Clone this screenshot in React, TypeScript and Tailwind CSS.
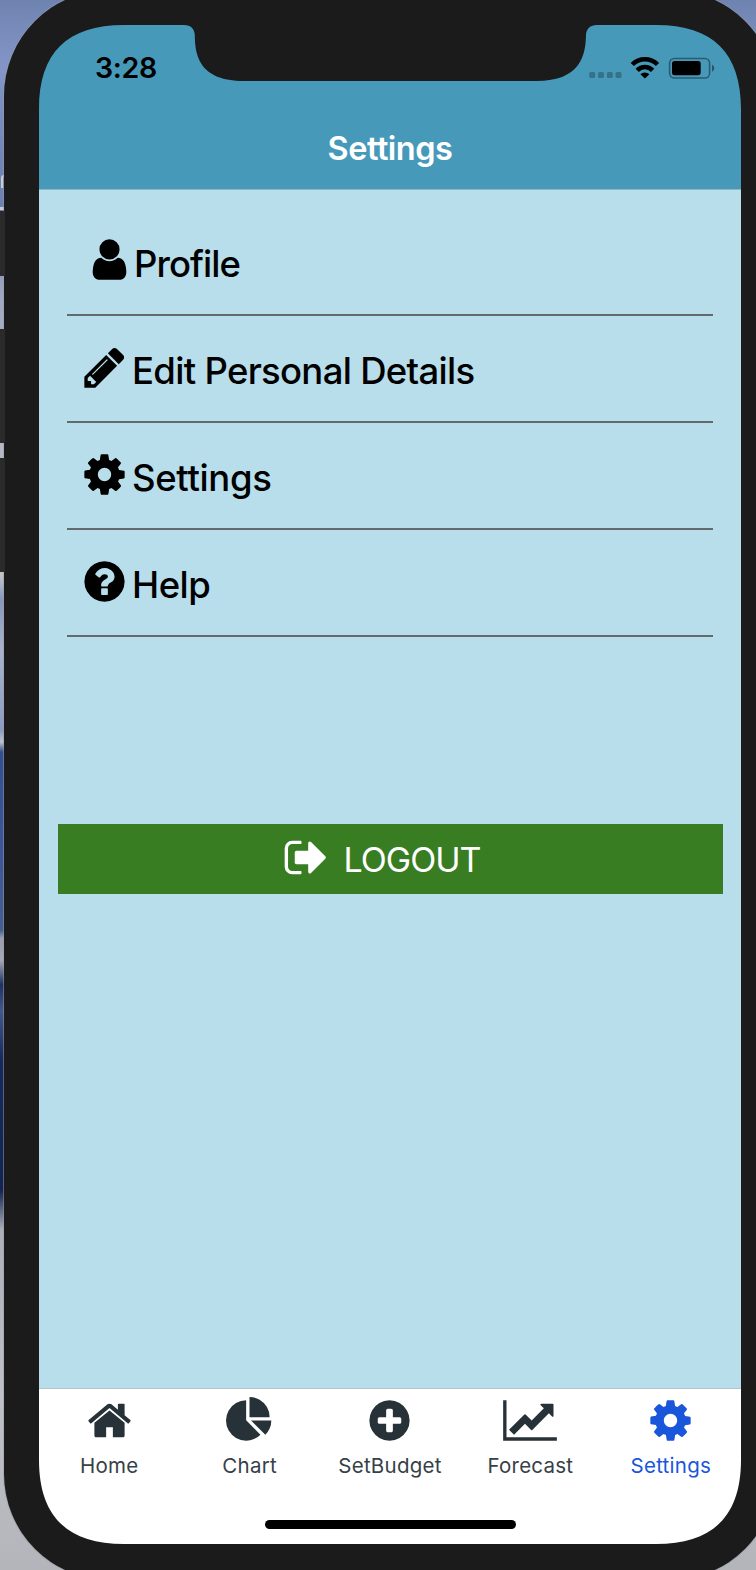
import React from 'react';

const PATHS = {
  user: 'M1536 1399q0 109-62.5 187t-150.5 78h-854q-88 0-150.5-78t-62.5-187q0-85 8.5-160.5t31.5-152 58.5-131 94-89 134.5-34.5q131 128 313 128t313-128q76 0 134.5 34.5t94 89 58.5 131 31.5 152 8.5 160.5zm-256-887q0 159-112.5 271.5t-271.5 112.5-271.5-112.5-112.5-271.5 112.5-271.5 271.5-112.5 271.5 112.5 112.5 271.5z',
  pencil: 'M491 1536l91-91-235-235-91 91v107h128v128h107zm523-928q0-22-22-22-10 0-17 7l-542 542q-7 7-7 17 0 22 22 22 10 0 17-7l542-542q7-7 7-17zm-54-192l416 416-832 832h-416v-416zm683 96q0 53-37 90l-166 166-416-416 166-165q36-38 90-38 53 0 91 38l235 234q37 39 37 91z',
  gear: 'M1152 896q0-106-75-181t-181-75-181 75-75 181 75 181 181 75 181-75 75-181zm512-109v222q0 12-8 23t-20 13l-185 28q-19 54-39 91 35 50 107 138 10 12 10 25t-9 23q-27 37-99 108t-94 71q-12 0-26-9l-138-108q-44 23-91 38-16 136-29 186-7 28-36 28h-222q-14 0-24.5-8.5t-11.5-21.5l-28-184q-49-16-90-37l-141 107q-10 9-25 9-14 0-25-11-126-114-165-168-7-10-7-23 0-12 8-23 15-21 51-66.5t54-70.5q-27-50-41-99l-183-27q-13-2-21-12.5t-8-23.5v-222q0-12 8-23t19-13l186-28q14-46 39-92-40-57-107-138-10-12-10-24 0-10 9-23 26-36 98.5-107.5t94.5-71.5q13 0 26 10l138 107q44-23 91-38 16-136 29-186 7-28 36-28h222q14 0 24.5 8.5t11.5 21.5l28 184q49 16 90 37l142-107q9-9 24-9 13 0 25 10 129 119 165 170 7 8 7 22 0 12-8 23-15 21-51 66.5t-54 70.5q26 50 41 98l183 28q13 2 21 12.5t8 23.5z',
  help: 'M1024 1376v-192q0-14-9-23t-23-9h-192q-14 0-23 9t-9 23v192q0 14 9 23t23 9h192q14 0 23-9t9-23zm256-672q0-88-55.5-163t-138.5-116-170-41q-243 0-371 213-15 24 8 42l132 100q7 6 19 6 16 0 25-12 53-68 86-92 34-24 86-24 48 0 85.5 26t37.5 59q0 38-20 61t-68 45q-63 28-115.5 86.5t-52.5 125.5v36q0 14 9 23t23 9h192q14 0 23-9t9-23q0-19 21.5-49.5t54.5-49.5q32-18 49-28.5t46-35 44.5-48 28-60.5 12.5-81zm384 192q0 209-103 385.5t-279.5 279.5-385.5 103-385.5-103-279.5-279.5-103-385.5 103-385.5 279.5-279.5 385.5-103 385.5 103 279.5 279.5 103 385.5z',
  signOut: 'M704 1440q0 4 1 20t.5 26.5-3 23.5-10 19.5-20.5 6.5h-320q-119 0-203.5-84.5t-84.5-203.5v-704q0-119 84.5-203.5t203.5-84.5h320q13 0 22.5 9.5t9.5 22.5q0 4 1 20t.5 26.5-3 23.5-10 19.5-20.5 6.5h-320q-66 0-113 47t-47 113v704q0 66 47 113t113 47h312l11.5 1 11.5 3 8 5.5 7 9 2 13.5zm928-544q0 26-19 45l-544 544q-19 19-45 19t-45-19-19-45v-288h-448q-26 0-45-19t-19-45v-384q0-26 19-45t45-19h448v-288q0-26 19-45t45-19 45 19l544 544q19 19 19 45z',
  home: 'M1472 992v480q0 26-19 45t-45 19h-384v-384h-256v384h-384q-26 0-45-19t-19-45v-480q0-1 .5-3t.5-3l575-474 575 474q1 2 1 6zm223-69l-62 74q-8 9-21 11h-3q-13 0-21-7l-692-577-692 577q-12 8-24 7-13-2-21-11l-62-74q-8-10-7-23.5t11-21.5l719-599q32-26 76-26t76 26l244 204v-195q0-14 9-23t23-9h192q14 0 23 9t9 23v408l219 182q10 8 11 21.5t-7 23.5z',
  pie: 'M768 890l546 546q-106 108-247.5 168t-298.5 60q-209 0-385.5-103t-279.5-279.5-103-385.5 103-385.5 279.5-279.5 385.5-103v762zm187 6h773q0 157-60 298.5t-168 247.5zm709-128h-768v-768q209 0 385.5 103t279.5 279.5 103 385.5z',
  plus: 'M1344 960v-128q0-26-19-45t-45-19h-256v-256q0-26-19-45t-45-19h-128q-26 0-45 19t-19 45v256h-256q-26 0-45 19t-19 45v128q0 26 19 45t45 19h256v256q0 26 19 45t45 19h128q26 0 45-19t19-45v-256h256q26 0 45-19t19-45zm320-64q0 209-103 385.5t-279.5 279.5-385.5 103-385.5-103-279.5-279.5-103-385.5 103-385.5 279.5-279.5 385.5-103 385.5 103 279.5 279.5 103 385.5z',
  line: 'M2048 1536v128h-2048v-1536h128v1408h1920zm-128-1248v435q0 21-19.5 29.5t-35.5-7.5l-121-121-633 633q-10 10-23 10t-23-10l-233-233-416 416-192-192 585-585q10-10 23-10t23 10l233 233 464-464-121-121q-16-16-7.5-35.5t29.5-19.5h435q14 0 23 9t9 23z',
};

type IconName = keyof typeof PATHS;

function Icon({ name, className = 'h-[47px] w-[47px]', box = '0 0 1792 1792' }: { name: IconName; className?: string; box?: string }) {
  return (
    <svg viewBox={box} className={`shrink-0 fill-current ${className}`}>
      <path d={PATHS[name]} />
    </svg>
  );
}

const MENU: { icon: IconName; label: string; pad: string; text: string }[] = [
  { icon: 'user', label: 'Profile', pad: 'pl-[19px]', text: 'ml-[1px] tracking-[-0.95px]' },
  { icon: 'pencil', label: 'Edit Personal Details', pad: 'pl-[14px]', text: 'ml-[4px] tracking-[-0.7px]' },
  { icon: 'gear', label: 'Settings', pad: 'pl-[14px]', text: 'ml-[4px] tracking-[-0.35px]' },
  { icon: 'help', label: 'Help', pad: 'pl-[14px]', text: 'ml-[4px] tracking-[-0.5px]' },
];

const TABS: { icon: IconName; label: string; className?: string; box?: string }[] = [
  { icon: 'home', label: 'Home' },
  { icon: 'pie', label: 'Chart' },
  { icon: 'plus', label: 'SetBudget' },
  { icon: 'line', label: 'Forecast', className: 'h-[47px] w-[54px]', box: '0 0 2048 1792' },
  { icon: 'gear', label: 'Settings' },
];

function StatusIcons() {
  return (
    <svg viewBox="580 45 140 50" className="mt-[4px] h-[50px] w-[140px]">
      <g fill="#000" opacity=".25">
        <rect x="589.2" y="72" width="6" height="6" rx="1.5" />
        <rect x="598" y="72" width="6" height="6" rx="1.5" />
        <rect x="606.8" y="72" width="6" height="6" rx="1.5" />
        <rect x="615.5" y="72" width="6" height="6" rx="1.5" />
      </g>
      <g fill="none" stroke="#000" strokeWidth="4.6">
        <path d="M632.3 64.5A17.8 17.8 0 0 1 657.5 64.5" />
        <path d="M637.2 70.3A10.8 10.8 0 0 1 652.6 70.3" />
      </g>
      <path d="M640.4 74.3A6.5 6.5 0 0 1 649.4 74.3L644.9 78.6Z" />
      <rect x="669.6" y="58.500" width="40" height="19.5" rx="4.8" fill="none" stroke="#000" strokeOpacity=".4" strokeWidth="1.6" />
      <rect x="672" y="61" width="28.7" height="14.2" rx="2.6" />
      <path d="M712 64.6Q714.3 66 714.3 68.3T712 72Z" opacity=".45" />
    </svg>
  );
}

export default function App() {
  return (
    <div className="relative h-[1570px] w-[756px] overflow-hidden bg-[linear-gradient(180deg,#6f83b0_0px,#8496c8_70px,#7386b8_150px,#6d80ad_210px,#a0a9c0_300px,#b4b8c2_450px,#c0c2c8_575px,#8798bd_600px,#a9b4ca_650px,#8b9cc2_730px,#c0c4cc_742px,#34508c_752px,#3e5896_860px,#44608f_930px,#9a9eae_938px,#a6a8b4_960px,#1e3160_985px,#44598a_1010px,#162a5a_1060px,#132450_1190px,#adb0b8_1230px,#c0c1c6_1400px,#b4b5ba_1570px)] font-['Inter',sans-serif]">
      <div className="absolute left-[1px] top-[175px] h-[13px] w-[4px] rounded-tl-[3px] border-l-2 border-t-2 border-[#c9cbd0]" />
      <div className="absolute left-0 top-[207px] h-[3px] w-[4px] bg-[#c9cbd0]" />
      <div className="absolute left-[4px] top-[-10px] h-[1590px] w-[772px] rounded-[106px] bg-[#1b1b1b] shadow-[0_0_0_1px_rgba(150,155,170,0.5)]" />
      <div className="absolute left-0 top-[211px] h-[65px] w-[5px] bg-[#2a2a2a]" />
      <div className="absolute left-0 top-[329px] h-[114px] w-[5px] bg-[#2a2a2a]" />
      <div className="absolute left-0 top-[458px] h-[114px] w-[5px] bg-[#2a2a2a]" />

      <main className="relative ml-[39px] mt-[25px] flex h-[1519px] w-[702px] flex-col bg-[#b8ddeb]">
        <header className="flex h-[165px] flex-col border-b border-[#8fb4c4] bg-[#4799ba]">
          <div className="flex h-[86px] items-center justify-between pl-[56px] pr-[21px]">
            <span className="mt-[1px] text-[28.5px] font-semibold leading-none tracking-[-0.3px]">3:28</span>
            <StatusIcons />
          </div>
          <h1 className="pt-[18px] text-center text-[32.5px] font-semibold leading-[40px] tracking-[-0.5px] text-white">Settings</h1>
        </header>

        <ul className="mx-[28px] mt-[18.6px]">
          {MENU.map((m) => (
            <li key={m.label} className={`flex h-[107.2px] items-start border-b-2 border-[#626a6d] pt-[27.8px] ${m.pad}`}>
              <Icon name={m.icon} />
              <span className={`mt-[5.5px] whitespace-nowrap text-[36.5px] font-medium leading-[44px] text-black ${m.text}`}>{m.label}</span>
            </li>
          ))}
        </ul>

        <button className="mx-[18.5px] mt-[187px] flex h-[70px] items-center justify-center gap-[14px] bg-[#387d22] pr-[17px] text-white">
          <Icon name="signOut" className="mb-[4px] h-[47px] w-[47px]" />
          <span className="pt-[1px] text-[34px] font-normal leading-none tracking-[-1px]">LOGOUT</span>
        </button>

        <nav className="mt-auto grid h-[156px] grid-cols-5 border-t border-[#b6c3c9] bg-white">
          {TABS.map((t, i) => (
            <div key={t.label} className={`flex flex-col items-center pt-[8px] ${i === 4 ? 'text-[#1a56db]' : 'text-[#273238]'}`}>
              <Icon name={t.icon} className={t.className} box={t.box} />
              <span className={`mt-[9px] text-[20.5px] leading-[26px] tracking-[0.25px] ${i === 4 ? '' : 'text-[#364147]'}`}>{t.label}</span>
            </div>
          ))}
        </nav>

        <svg viewBox="39 25 702 1519" className="pointer-events-none absolute inset-0 h-full w-full" fill="#1b1b1b">
          <path d="M38 24H124V25C67 25 39 53 39 109H38Z" />
          <path d="M742 24H656V25C713 25 741 53 741 109H742Z" />
          <path d="M38 1545H124V1544C67 1544 39 1516 39 1460H38Z" />
          <path d="M742 1545H656V1544C713 1544 741 1516 741 1460H742Z" />
          <path d="M184 24V25C191 25 194.5 29 194.8 35C195 55 199 81 244 81H536C581 81 585.5 55 586 35C586.3 29 590 25 597 25V24Z" />
        </svg>
        <div className="absolute bottom-[15px] left-[226px] h-[9px] w-[251px] rounded-full bg-black" />
      </main>
    </div>
  );
}
